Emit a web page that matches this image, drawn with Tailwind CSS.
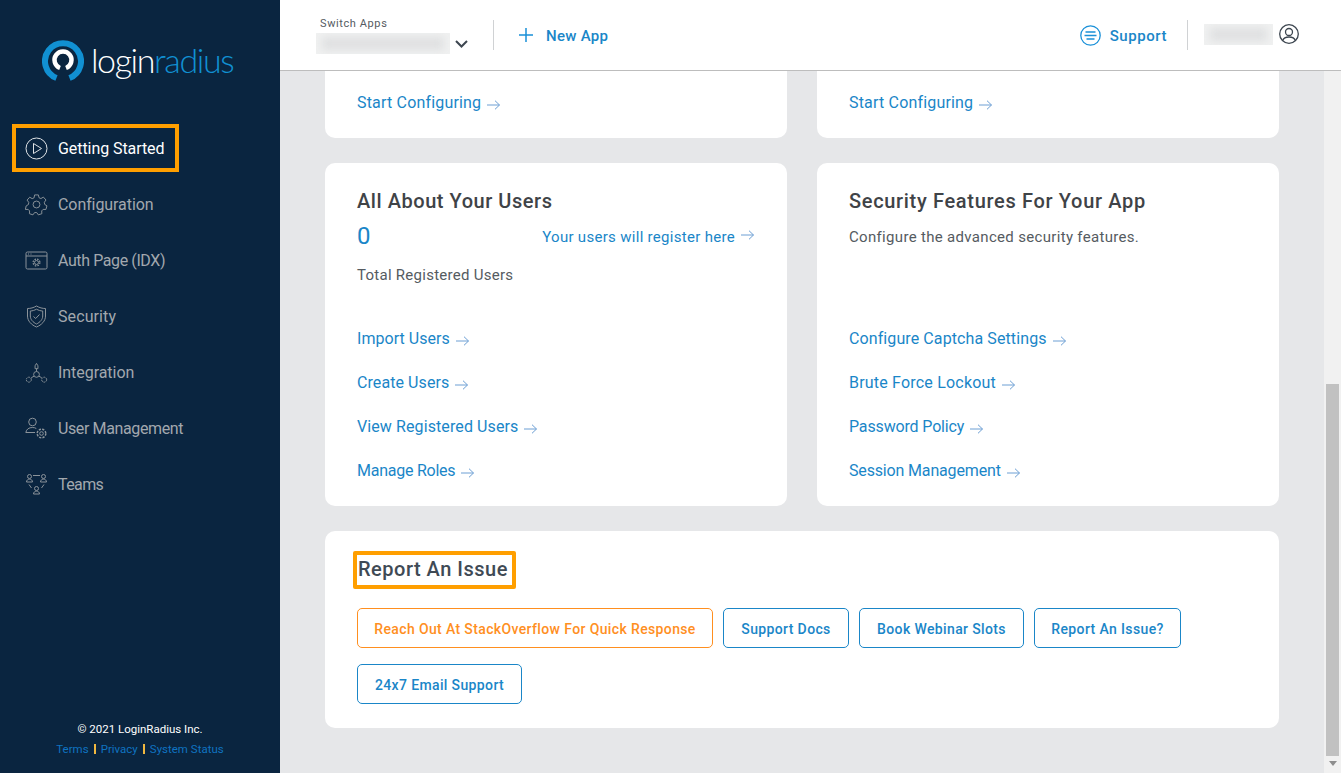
<!doctype html>
<html lang="en">
<head>
<meta charset="utf-8">
<script src="https://cdn.jsdelivr.net/npm/@tailwindcss/browser@4"></script>
<title>LoginRadius</title>
</head>
<body class="h-[773px] w-[1341px] overflow-hidden font-['Roboto',sans-serif]">
<div class="flex h-[773px] w-[1341px]">
  <aside class="flex h-full w-[280px] shrink-0 flex-col bg-[#0a2540]">
    <div class="flex h-[124px] shrink-0 items-start pl-[42px] pt-[40px]">
      <svg class="shrink-0" width="42" height="41" viewBox="0 0 42 41" fill="none">
        <path d="M14.500 38 A18 18 0 1 1 27.500 38" stroke="#1190d2" stroke-width="6"/>
        <path d="M18 28 A8.500 8.500 0 1 1 24 28" stroke="#ffffff" stroke-width="4.500"/>
      </svg>
      <span class="ml-[7px] mt-[-1px] font-['Lato',sans-serif] text-[34px] leading-[42px] font-light tracking-[-1.4px] whitespace-nowrap text-white">login<span class="text-[#1190d2]">radius</span></span>
    </div>
    <nav class="flex flex-col gap-[8px] pl-[12px] text-[16px] text-[#a2a8ae]">
      <a class="flex h-[48px] w-[167px] items-center gap-[10px] border-[4px] border-[#ff9f00] pl-[9px] text-white">
        <svg class="shrink-0" width="23" height="23" viewBox="0 0 23 23" fill="none" stroke="#dfe3e6" stroke-width="1"><circle cx="11.500" cy="11.500" r="10.500"/><path d="M8.500 6.500 16.500 11.500 8.500 16.500Z" stroke-linejoin="round"/></svg>
        <span class="pt-[2px] tracking-[-0.07px]">Getting Started</span>
      </a>
      <a class="flex h-[48px] items-center gap-[10px] border-[4px] border-transparent pl-[9px]">
        <svg class="shrink-0" width="23" height="23" viewBox="0 0 24 24" fill="none" stroke="#8b939a" stroke-width="1"><circle cx="12" cy="12" r="3.600"/><path d="M10 2h4l.6 2.900 2 .9 2.600-1.500 2.700 3-1.700 2.400.3 2.200 2.400 1.500-1.100 3.800-2.900-.1-1.500 1.600.2 2.900-3.700 1.200-1.700-2.400h-2.200l-1.700 2.400-3.700-1.200.2-2.900-1.500-1.600-2.900.1L1.200 13.500l2.400-1.500.3-2.200L2.200 7.400l2.700-3 2.600 1.500 2-.9Z" stroke-linejoin="round"/></svg>
        <span class="pt-[2px] tracking-[-0.08px]">Configuration</span>
      </a>
      <a class="flex h-[48px] items-center gap-[10px] border-[4px] border-transparent pl-[9px]">
        <svg class="shrink-0" width="23" height="23" viewBox="0 0 23 23" fill="none" stroke="#8b939a" stroke-width="1"><rect x="1" y="3" width="21" height="17" rx="1.500"/><path d="M1 7h21"/><path d="M3 5h1M5.500 5h1"/><circle cx="11.500" cy="13.500" r="2"/><circle cx="11.500" cy="13.500" r="3.400" stroke-dasharray="1.600 1.100" stroke-width="1.200"/></svg>
        <span class="pt-[2px] tracking-[-0.4px]">Auth Page (IDX)</span>
      </a>
      <a class="flex h-[48px] items-center gap-[10px] border-[4px] border-transparent pl-[9px]">
        <svg class="shrink-0" width="23" height="23" viewBox="0 0 23 23" fill="none" stroke="#8b939a" stroke-width="1"><path d="M11.500 1 C14.500 2.800 17.500 3.500 20.500 3.500 V11 C20.500 16 16.500 20 11.500 22 C6.500 20 2.500 16 2.500 11 V3.500 C5.500 3.500 8.500 2.800 11.500 1Z"/><path d="M11.500 4.200 C13.500 5.300 15.500 5.900 17.700 6 V11 C17.700 14.500 15 17.300 11.500 19 C8 17.300 5.300 14.500 5.300 11 V6 C7.500 5.900 9.500 5.300 11.500 4.200Z"/><path d="M8.500 11.500 10.700 13.500 14.500 9.500"/></svg>
        <span class="pt-[2px] tracking-[0.1px]">Security</span>
      </a>
      <a class="flex h-[48px] items-center gap-[10px] border-[4px] border-transparent pl-[9px]">
        <svg class="shrink-0" width="23" height="23" viewBox="0 0 24 23" fill="none" stroke="#8b939a" stroke-width="1"><circle cx="12" cy="13.500" r="3"/><path d="M10.500 7.500V4.500L12 2l1.500 2.500v3h-3ZM12 7.500v3"/><path d="M9.500 15.300 6.500 17M14.500 15.300l3 1.700"/><circle cx="4" cy="19" r="2.600" stroke-dasharray="2 .8"/><circle cx="20" cy="19" r="2.600" stroke-dasharray="2 .8"/></svg>
        <span class="pt-[2px] tracking-[-0.05px]">Integration</span>
      </a>
      <a class="flex h-[48px] items-center gap-[10px] border-[4px] border-transparent pl-[9px]">
        <svg class="shrink-0" width="23" height="23" viewBox="0 0 23 23" fill="none" stroke="#8b939a" stroke-width="1"><circle cx="7.500" cy="5" r="3.800"/><path d="M.8 15.500C1.500 12 4 10.500 7.500 10.500c1.500 0 2.800.3 3.800 1M.8 15.500H10"/><circle cx="16.500" cy="16.500" r="1.800"/><circle cx="16.500" cy="16.500" r="4.300" stroke-dasharray="2.200 1.200" stroke-width="1.500"/></svg>
        <span class="pt-[2px] tracking-[-0.38px]">User Management</span>
      </a>
      <a class="flex h-[48px] items-center gap-[10px] border-[4px] border-transparent pl-[9px]">
        <svg class="shrink-0" width="23" height="23" viewBox="0 0 23 23" fill="none" stroke="#8b939a" stroke-width="1"><circle cx="4.500" cy="3.500" r="2"/><path d="M1.500 9c0-1.800 1.300-2.800 3-2.800S7.500 7.200 7.500 9Z"/><circle cx="18.500" cy="3.500" r="2"/><path d="M15.500 9c0-1.800 1.300-2.800 3-2.800s3 1 3 2.800Z"/><circle cx="11.500" cy="15.500" r="2"/><path d="M8.500 21c0-1.800 1.300-2.800 3-2.800s3 1 3 2.800Z"/><path d="M8 2.500h7M4 11.500l2.500 3.500M19 11.500 16.500 15"/></svg>
        <span class="pt-[2px] tracking-[-0.6px]">Teams</span>
      </a>
    </nav>
    <div class="mt-auto flex flex-col items-center pb-[14px] text-[11.5px] leading-[20px]">
      <p class="text-white">© 2021 LoginRadius Inc.</p>
      <p class="flex items-center text-[#0f73c0]">
        <a>Terms</a><span class="mx-[5px] h-[10px] w-[2px] bg-[#f0b840]"></span><a>Privacy</a><span class="mx-[5px] h-[10px] w-[2px] bg-[#f0b840]"></span><a>System Status</a>
      </p>
    </div>
  </aside>

  <div class="flex h-full min-w-0 flex-1 flex-col">
    <header class="flex h-[71px] shrink-0 items-center border-b border-[#bdbdbd] bg-white">
      <div class="ml-[36px] flex w-[152px] flex-col self-start pt-[17px]">
        <span class="ml-[4px] text-[11px] leading-[14px] tracking-[0.6px] text-[#555b61]">Switch Apps</span>
        <div class="mt-[2px] flex items-center">
          <div class="h-[21px] w-[134px] overflow-hidden bg-[#f0f1f1]"><div class="mx-[6px] my-[4px] h-[13px] bg-[#dfe0e1] blur-[4px]"></div></div>
          <svg class="ml-[5px] mt-[1px]" width="13" height="8" viewBox="0 0 13 8" fill="none" stroke="#3d4650" stroke-width="2"><path d="M1 1l5.500 5.500L12 1"/></svg>
        </div>
      </div>
      <div class="ml-[25px] h-[30px] w-px bg-[#d0d2d4]"></div>
      <svg class="ml-[25px]" width="14" height="14" viewBox="0 0 14 14" fill="none" stroke="#1a90d8" stroke-width="1.500"><path d="M7 0v14M0 7h14"/></svg>
      <span class="ml-[13px] pt-[2px] text-[15px] font-medium tracking-[0.3px] text-[#1a86c8]">New App</span>
      <svg class="ml-auto" width="21" height="21" viewBox="0 0 21 21" fill="none" stroke="#1a90d8" stroke-width="1.300"><circle cx="10.500" cy="10.500" r="9.700"/><path d="M5.500 7h10M4.500 10.500h12M6.500 14h8"/></svg>
      <span class="ml-[9px] pt-[2px] text-[15px] font-medium tracking-[0.55px] text-[#1a86c8]">Support</span>
      <div class="ml-[20px] h-[30px] w-px bg-[#d0d2d4]"></div>
      <div class="mb-[2px] ml-[16px] h-[21px] w-[69px] overflow-hidden bg-[#f0f1f1]"><div class="mx-[6px] my-[4px] h-[13px] bg-[#dfe0e1] blur-[4px]"></div></div>
      <svg class="mb-[2px] ml-[6px] mr-[42px]" width="20" height="20" viewBox="0 0 20 20" fill="none" stroke="#3d4650" stroke-width="1.300"><circle cx="10" cy="10" r="9.300"/><circle cx="10" cy="8" r="3.500"/><path d="M3.700 16.500C4.500 14 7 13 10 13s5.500 1 6.300 3.500"/></svg>
    </header>

    <div class="flex min-h-0 flex-1">
      <main class="flex min-w-0 flex-1 flex-col gap-[25px] bg-[#e6e7e9] pl-[45px] pr-[45px]">
        <div class="grid grid-cols-[462px_462px] gap-x-[30px]">
          <div class="flex h-[67px] items-start rounded-b-[10px] bg-white pl-[32px] pt-[22px]">
            <a class="flex items-center text-[16px] leading-[20px] tracking-[0.18px] text-[#1a86c8]">Start Configuring<svg class="ml-[6px] mt-[4px]" width="13" height="10" viewBox="0 0 13 10" fill="none" stroke="#6d9fd4"><path d="M0 5h12.500M8 .7 12.500 5 8 9.300"/></svg></a>
          </div>
          <div class="flex h-[67px] items-start rounded-b-[10px] bg-white pl-[32px] pt-[22px]">
            <a class="flex items-center text-[16px] leading-[20px] tracking-[0.18px] text-[#1a86c8]">Start Configuring<svg class="ml-[6px] mt-[4px]" width="13" height="10" viewBox="0 0 13 10" fill="none" stroke="#6d9fd4"><path d="M0 5h12.500M8 .7 12.500 5 8 9.300"/></svg></a>
          </div>
        </div>
        <div class="grid grid-cols-[462px_462px] gap-x-[30px]">
          <section class="flex h-[343px] flex-col rounded-[10px] bg-white px-[32px] pt-[25px]">
            <h2 class="text-[20px] leading-[26px] font-medium tracking-[0.55px] text-[#3f4347]">All About Your Users</h2>
            <div class="mt-[8px] flex h-[28px] items-center justify-between">
              <span class="text-[24px] leading-[28px] text-[#1a86c8]">0</span>
              <a class="mt-[2px] flex items-center text-[15px] tracking-[0.3px] text-[#1a86c8]">Your users will register here<svg class="ml-[6px] mr-[1px] mt-[-4px]" width="13" height="10" viewBox="0 0 13 10" fill="none" stroke="#6d9fd4"><path d="M0 5h12.500M8 .7 12.500 5 8 9.300"/></svg></a>
            </div>
            <p class="mt-[15px] text-[15px] leading-[20px] tracking-[0.27px] text-[#555b61]">Total Registered Users</p>
            <div class="mt-[44px] flex flex-col gap-[24px]">
              <a class="flex items-center text-[16px] leading-[20px] tracking-[0.05px] text-[#1a86c8]">Import Users<svg class="ml-[6px] mt-[4px]" width="13" height="10" viewBox="0 0 13 10" fill="none" stroke="#6d9fd4"><path d="M0 5h12.500M8 .7 12.500 5 8 9.300"/></svg></a>
              <a class="flex items-center text-[16px] leading-[20px] tracking-[0.08px] text-[#1a86c8]">Create Users<svg class="ml-[6px] mt-[4px]" width="13" height="10" viewBox="0 0 13 10" fill="none" stroke="#6d9fd4"><path d="M0 5h12.500M8 .7 12.500 5 8 9.300"/></svg></a>
              <a class="flex items-center text-[16px] leading-[20px] tracking-[0.1px] text-[#1a86c8]">View Registered Users<svg class="ml-[6px] mt-[4px]" width="13" height="10" viewBox="0 0 13 10" fill="none" stroke="#6d9fd4"><path d="M0 5h12.500M8 .7 12.500 5 8 9.300"/></svg></a>
              <a class="flex items-center text-[16px] leading-[20px] tracking-[-0.25px] text-[#1a86c8]">Manage Roles<svg class="ml-[6px] mt-[4px]" width="13" height="10" viewBox="0 0 13 10" fill="none" stroke="#6d9fd4"><path d="M0 5h12.500M8 .7 12.500 5 8 9.300"/></svg></a>
            </div>
          </section>
          <section class="flex h-[343px] flex-col rounded-[10px] bg-white px-[32px] pt-[25px]">
            <h2 class="text-[20px] leading-[26px] font-medium tracking-[0.67px] text-[#3f4347]">Security Features For Your App</h2>
            <p class="mt-[13px] text-[15px] leading-[20px] tracking-[0.32px] text-[#555b61]">Configure the advanced security features.</p>
            <div class="mt-[82px] flex flex-col gap-[24px]">
              <a class="flex items-center text-[16px] leading-[20px] tracking-[0.1px] text-[#1a86c8]">Configure Captcha Settings<svg class="ml-[6px] mt-[4px]" width="13" height="10" viewBox="0 0 13 10" fill="none" stroke="#6d9fd4"><path d="M0 5h12.500M8 .7 12.500 5 8 9.300"/></svg></a>
              <a class="flex items-center text-[16px] leading-[20px] tracking-[0.2px] text-[#1a86c8]">Brute Force Lockout<svg class="ml-[6px] mt-[4px]" width="13" height="10" viewBox="0 0 13 10" fill="none" stroke="#6d9fd4"><path d="M0 5h12.500M8 .7 12.500 5 8 9.300"/></svg></a>
              <a class="flex items-center text-[16px] leading-[20px] tracking-[-0.15px] text-[#1a86c8]">Password Policy<svg class="ml-[6px] mt-[4px]" width="13" height="10" viewBox="0 0 13 10" fill="none" stroke="#6d9fd4"><path d="M0 5h12.500M8 .7 12.500 5 8 9.300"/></svg></a>
              <a class="flex items-center text-[16px] leading-[20px] tracking-[-0.16px] text-[#1a86c8]">Session Management<svg class="ml-[6px] mt-[4px]" width="13" height="10" viewBox="0 0 13 10" fill="none" stroke="#6d9fd4"><path d="M0 5h12.500M8 .7 12.500 5 8 9.300"/></svg></a>
            </div>
          </section>
        </div>
        <section class="flex h-[197px] w-[954px] flex-col rounded-[10px] bg-white pl-[28px] pt-[20px]">
          <h2 class="w-fit rounded-[2px] border-[4px] border-[#ff9f00] pb-[2px] pl-[1px] pr-[4px] text-[20px] leading-[28px] font-medium tracking-[0.5px] text-[#3f4a55]">Report An Issue</h2>
          <div class="ml-[4px] mt-[19px] flex w-[900px] flex-wrap gap-x-[10px] gap-y-[16px] text-[14px] font-medium tracking-[0.37px]">
            <a class="flex h-[40px] w-[356px] items-center justify-center rounded-[5px] border border-[#ff8f1f] pt-[2px] text-[#ff8f1f]">Reach Out At StackOverflow For Quick Response</a>
            <a class="flex h-[40px] w-[126px] items-center justify-center rounded-[5px] border border-[#1a86c8] pt-[2px] text-[#1a86c8]">Support Docs</a>
            <a class="flex h-[40px] w-[165px] items-center justify-center rounded-[5px] border border-[#1a86c8] pt-[2px] text-[#1a86c8]">Book Webinar Slots</a>
            <a class="flex h-[40px] w-[147px] items-center justify-center rounded-[5px] border border-[#1a86c8] pt-[2px] text-[#1a86c8]">Report An Issue?</a>
            <a class="flex h-[40px] w-[165px] items-center justify-center rounded-[5px] border border-[#1a86c8] pt-[2px] text-[#1a86c8]">24x7 Email Support</a>
          </div>
        </section>
      </main>
      <div class="flex w-[17px] shrink-0 flex-col items-center bg-[#f1f1f1] pt-[313px]">
        <div class="h-[372px] w-[13px] bg-[#c1c1c1]"></div>
        <svg class="mt-[5px]" width="8" height="5" viewBox="0 0 8 5" fill="#8e8e8e"><path d="M0 0h8L4 5Z"/></svg>
      </div>
    </div>
  </div>
</div>
</body>
</html>
